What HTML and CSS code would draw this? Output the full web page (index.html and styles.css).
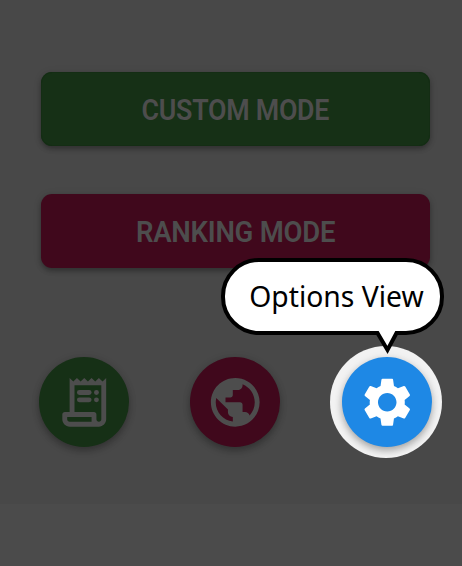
FILE: index.html
```html
<!DOCTYPE html>
<html lang="en">
<head>
<meta charset="utf-8">
<title>Game menu</title>
<link rel="stylesheet" href="styles.css">
</head>
<body>
<main class="menu">
  <button class="mode custom"><span>CUSTOM MODE</span></button>
  <button class="mode ranking"><span>RANKING MODE</span></button>
  <nav class="actions">
    <button class="round green" aria-label="History">
      <svg viewBox="0 0 24 24"><path fill-rule="evenodd" d="M19.5 3.5L18 2l-1.5 1.5L15 2l-1.5 1.5L12 2l-1.5 1.5L9 2 7.5 3.5 6 2v14H4c-.55 0-1 .45-1 1v2c0 1.66 1.34 3 3 3h12c1.66 0 3-1.34 3-3V2l-1.5 1.5zM15 20H6c-.55 0-1-.45-1-1v-1h10v2zm4-1c0 .55-.45 1-1 1s-1-.45-1-1v-2c0-.55-.45-1-1-1H8V5h11v14z"/><rect x="9" y="7" width="6" height="2" rx="1"/><rect x="9" y="10" width="6" height="2" rx="1"/><circle cx="17" cy="8" r="1"/><circle cx="17" cy="11" r="1"/></svg>
    </button>
    <button class="round red" aria-label="Online">
      <svg viewBox="0 0 24 24"><path d="M12 2C6.48 2 2 6.48 2 12s4.48 10 10 10 10-4.48 10-10S17.52 2 12 2zm-1 17.93c-3.95-.49-7-3.85-7-7.93 0-.62.08-1.21.21-1.79L9 15v1c0 1.1.9 2 2 2v1.93zm6.9-2.54c-.26-.81-1-1.39-1.9-1.39h-1v-3c0-.55-.45-1-1-1H8v-2h2c.55 0 1-.45 1-1V7h2c1.1 0 2-.9 2-2v-.41c2.93 1.19 5 4.06 5 7.41 0 2.08-.8 3.97-2.1 5.39z"/></svg>
    </button>
    <div class="halo">
      <button class="round blue" aria-label="Options">
        <svg viewBox="0 0 24 24"><path d="M19.14 12.94c.04-.3.06-.61.06-.94 0-.32-.02-.64-.07-.94l2.03-1.58c.18-.14.23-.41.12-.61l-1.92-3.32c-.12-.22-.37-.29-.59-.22l-2.39.96c-.5-.38-1.03-.7-1.62-.94l-.36-2.54c-.04-.24-.24-.41-.48-.41h-3.84c-.24 0-.43.17-.47.41l-.36 2.54c-.59.24-1.13.57-1.62.94l-2.39-.96c-.22-.08-.47 0-.59.22L2.74 8.87c-.12.21-.08.47.12.61l2.03 1.58c-.05.3-.09.63-.09.94s.02.64.07.94l-2.03 1.58c-.18.14-.23.41-.12.61l1.92 3.32c.12.22.37.29.59.22l2.39-.96c.5.38 1.03.7 1.62.94l.36 2.54c.05.24.24.41.48.41h3.84c.24 0 .44-.17.47-.41l.36-2.54c.59-.24 1.13-.56 1.62-.94l2.39.96c.22.08.47 0 .59-.22l1.92-3.32c.12-.22.07-.47-.12-.61l-2.01-1.58zM12 15.8c-2.1 0-3.8-1.7-3.8-3.8s1.7-3.8 3.8-3.8 3.8 1.7 3.8 3.8-1.7 3.8-3.8 3.8z"/></svg>
      </button>
      <div class="tooltip" role="tooltip"><span>Options View</span>
        <svg class="tail" viewBox="0 0 28 26"><path class="fill" d="M4 0L14.5 19L24 0z"/><path class="edge" d="M2 3H4.5L14.5 20L23.5 3H26"/></svg>
      </div>
    </div>
  </nav>
</main>
<footer class="strip"></footer>
</body>
</html>
```
FILE: styles.css
```css
* { box-sizing: border-box; }
body {
  display: flex;
  flex-direction: column;
  margin: 0;
  height: 566px;
  overflow: hidden;
  background: #484848;
}
button { border: 0; padding: 0; font: inherit; }
svg { display: block; }

.menu {
  display: flex;
  flex-direction: column;
  flex: 0 0 504px;
  gap: 48px;
  padding: 72px 32px 0 41px;
}
.strip { flex: 1; background: #4b4b4b; }

.mode {
  display: flex;
  align-items: center;
  justify-content: center;
  height: 74px;
  border-radius: 11px;
  color: #4d4d4d;
  font: 600 29.5px/36px Roboto, sans-serif;
  box-shadow: 0 3px 5px rgba(0, 0, 0, .28), 0 1px 8px rgba(0, 0, 0, .1);
}
.mode span { display: block; white-space: nowrap; padding-top: 2px; letter-spacing: -.3px; }
.custom {
  background: #163016;
  box-shadow: inset 0 0 0 1px #142d14, 0 3px 5px rgba(0, 0, 0, .28), 0 1px 8px rgba(0, 0, 0, .1);
}
.custom span { transform: scaleX(.908); }
.ranking { background: #40081c; }
.ranking span { transform: scaleX(.934); }

.actions {
  display: flex;
  align-items: center;
  justify-content: space-between;
  margin: 30px -12px 0 -2px;
}
.round {
  display: flex;
  align-items: center;
  justify-content: center;
  width: 90px;
  height: 90px;
  border-radius: 50%;
  box-shadow: 0 4px 7px rgba(0, 0, 0, .25), 0 1px 9px rgba(0, 0, 0, .1);
}
.round svg { width: 58.5px; height: 58.5px; fill: #4d4d4d; }
.green { background: #163016; }
.red { background: #40081c; margin-left: 11.5px; }
.blue { background: #1e88e5; margin-left: 2px; }
.blue svg { fill: #fff; }
.halo {
  position: relative;
  display: flex;
  align-items: center;
  justify-content: center;
  width: 112px;
  height: 112px;
  border-radius: 50%;
  background: #f2f2f2;
}
.tooltip {
  position: absolute;
  right: -2px;
  bottom: 123px;
  display: flex;
  align-items: center;
  justify-content: center;
  width: 223px;
  height: 77px;
  padding: 0 0 1px 8px;
  border: 4px solid #000;
  border-radius: 38px;
  background: #fff;
  color: #000;
  font: 29px/40px "Noto Sans", sans-serif;
  white-space: nowrap;
}
.tooltip span { transform: scaleX(.976); }
.tail {
  position: absolute;
  left: 148px;
  top: 68px;
  width: 28px;
  height: 26px;
  overflow: visible;
}
.tail .fill { fill: #fff; }
.tail .edge { fill: none; stroke: #000; stroke-width: 4; }
```
